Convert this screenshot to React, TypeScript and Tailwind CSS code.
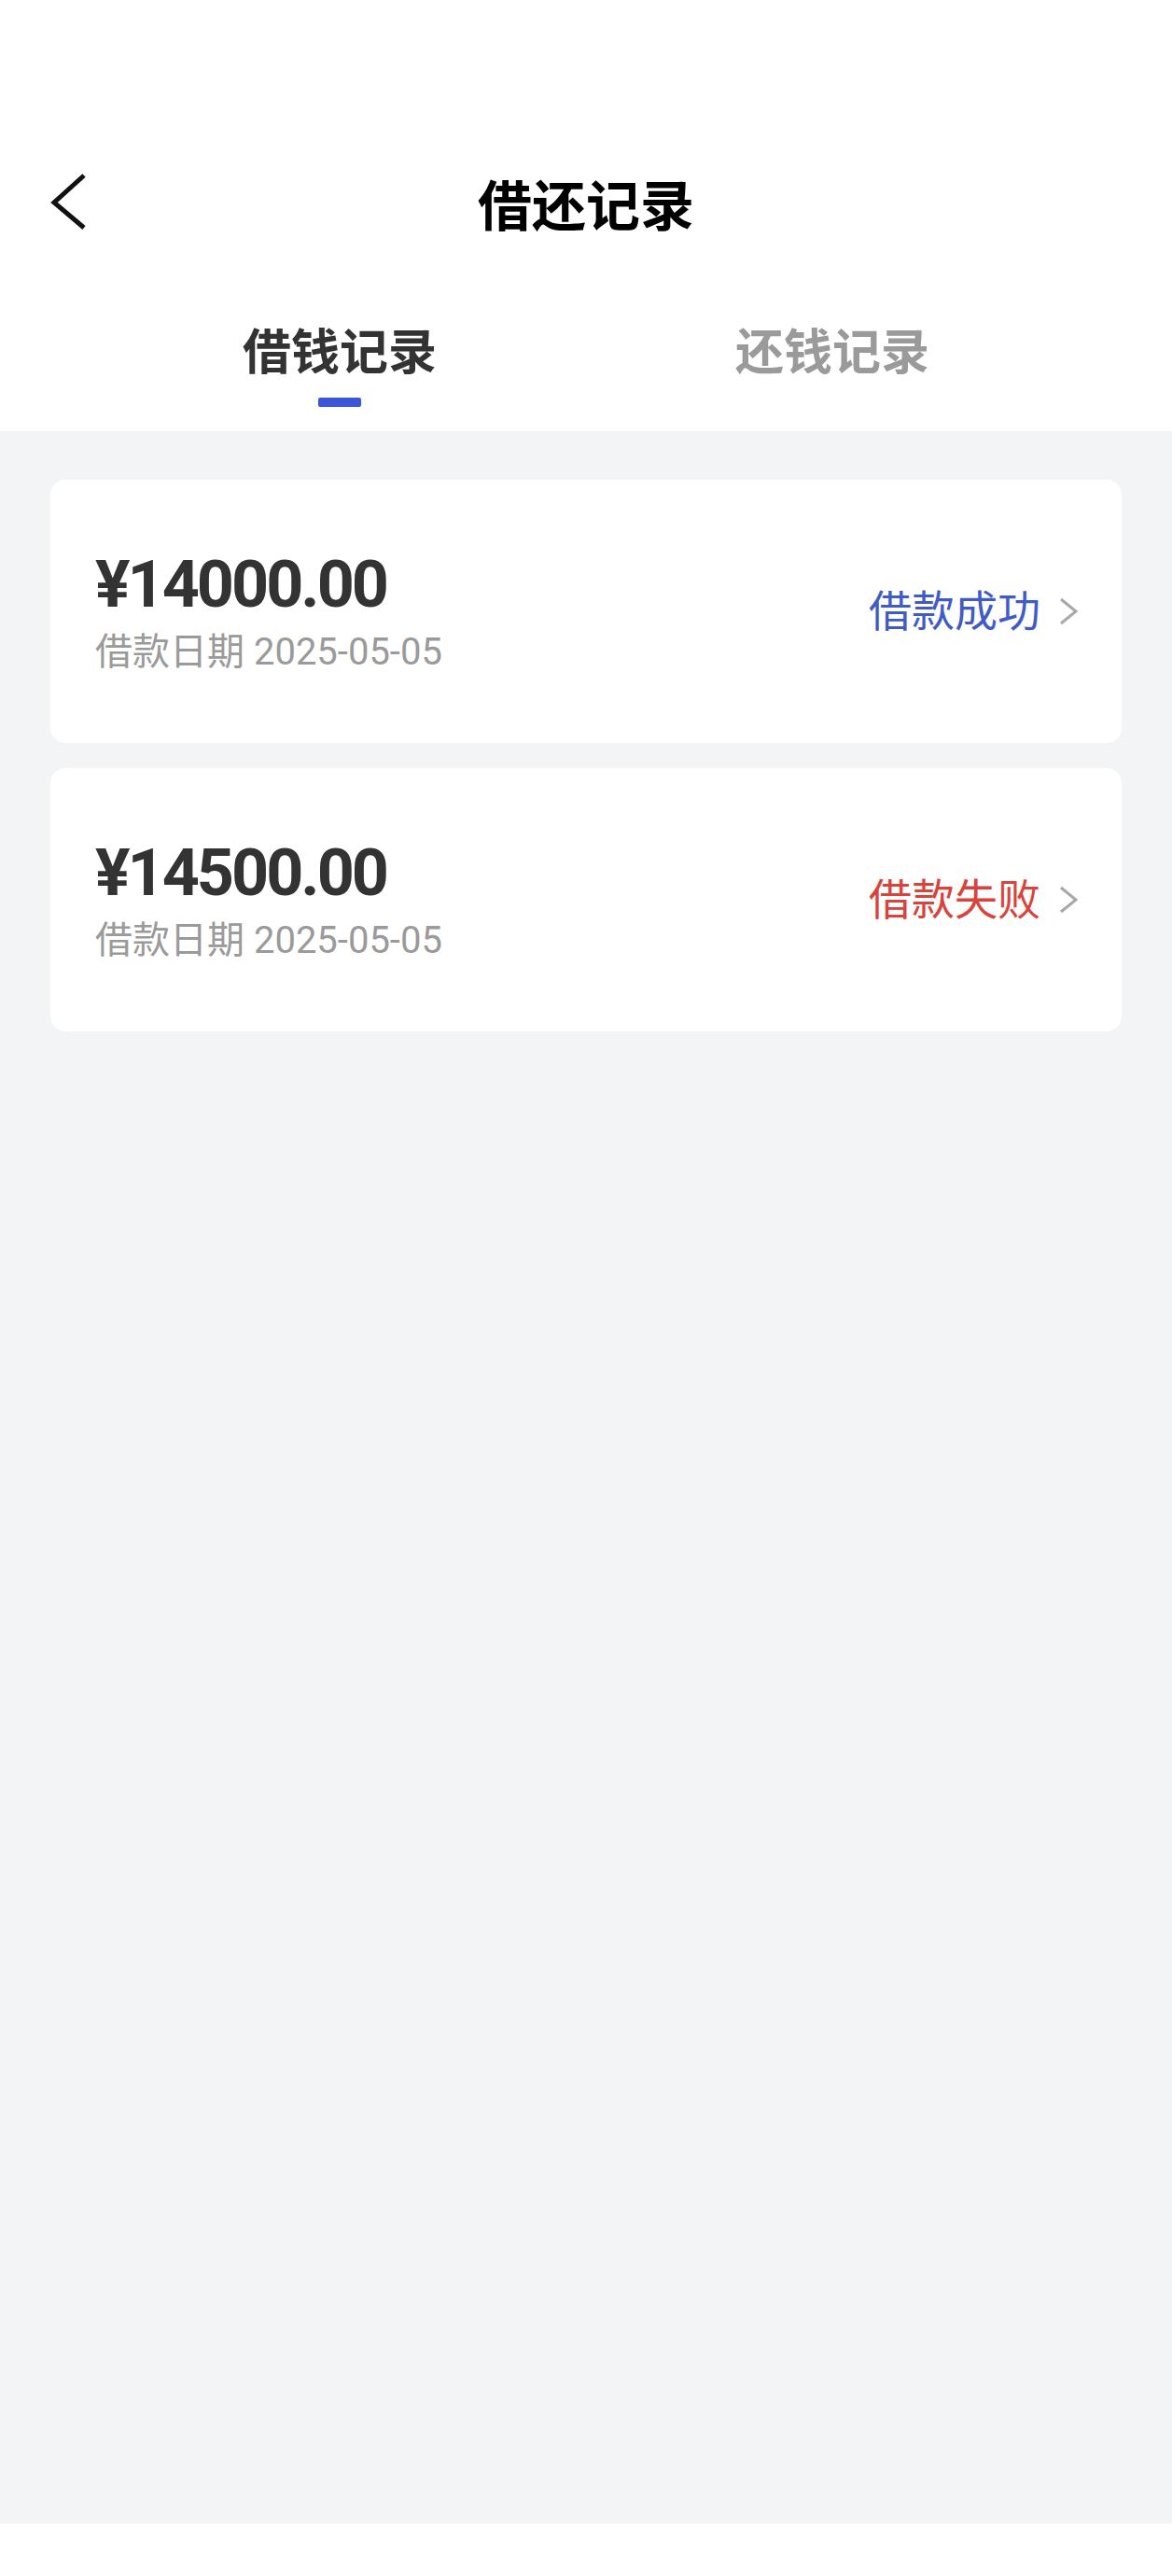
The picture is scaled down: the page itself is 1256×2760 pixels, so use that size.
import React from 'react';

type LoanRecord = {
  id: string;
  amount: string;
  date: string;
  status: string;
  ok: boolean;
};

const records: LoanRecord[] = [
  { id: '1', amount: '¥14000.00', date: '2025-05-05', status: '借款成功', ok: true },
  { id: '2', amount: '¥14500.00', date: '2025-05-05', status: '借款失败', ok: false },
];

const BackIcon: React.FC = () => (
  <svg width="40" height="64" viewBox="0 0 40 64" fill="none">
    <polyline points="36,4 4,33 36,60" stroke="#111" strokeWidth="5" strokeLinejoin="miter" />
  </svg>
);

const ArrowRight: React.FC = () => (
  <svg width="20" height="30" viewBox="0 0 20 30" fill="none">
    <polyline points="2,2 18,15 2,28" stroke="#a8a8a8" strokeWidth="3" />
  </svg>
);

const RecordCard: React.FC<{ record: LoanRecord }> = ({ record }) => {
  return (
    <div className="flex h-[282px] items-center justify-between rounded-[16px] bg-white pl-[48px] pr-[47px]">
      <div className="flex flex-col">
        <span className="text-[70px] font-bold leading-none tracking-[-3px] text-[#333333]">
          {record.amount}
        </span>
        <span className="mt-[18px] text-[40px] leading-none text-[#9a9a9a]">
          借款日期 {record.date}
        </span>
      </div>
      <div className="flex items-center gap-[20px]">
        <span
          className={
            record.ok
              ? 'text-[46px] leading-none text-[#3f5bc6]'
              : 'text-[46px] leading-none text-[#d8433b]'
          }
        >
          {record.status}
        </span>
        <ArrowRight />
      </div>
    </div>
  );
};

const App: React.FC = () => {
  return (
    <div className="min-h-[2760px] w-[1256px] bg-white font-['Roboto','Noto_Sans_CJK_SC',sans-serif]">
      {/* status bar space */}
      <div className="h-[160px]" />

      {/* nav bar */}
      <div className="grid h-[124px] grid-cols-[1fr_auto_1fr] items-start">
        <div className="mt-[24px] pl-[54px]">
          <BackIcon />
        </div>
        <h1 className="mt-[33px] text-[58px] font-bold leading-none text-black">借还记录</h1>
        <div />
      </div>

      {/* tabs */}
      <div className="flex px-[100px] pb-[26px] pt-[69px]">
        <div className="flex flex-1 flex-col items-center">
          <span className="text-[52px] font-bold leading-none text-[#333333]">借钱记录</span>
          <span className="mt-[21px] h-[10px] w-[46px] rounded-[2px] bg-[#3c56d8]" />
        </div>
        <div className="flex flex-1 flex-col items-center">
          <span className="text-[52px] font-bold leading-none text-[#9a9a9a]">还钱记录</span>
          <span className="mt-[21px] h-[10px] w-[46px]" />
        </div>
      </div>

      {/* list */}
      <div className="flex h-[2242px] flex-col gap-[27px] bg-[#f3f4f6] px-[54px] pt-[52px]">
        {records.map((r) => (
          <RecordCard key={r.id} record={r} />
        ))}
      </div>
    </div>
  );
};

export default App;
